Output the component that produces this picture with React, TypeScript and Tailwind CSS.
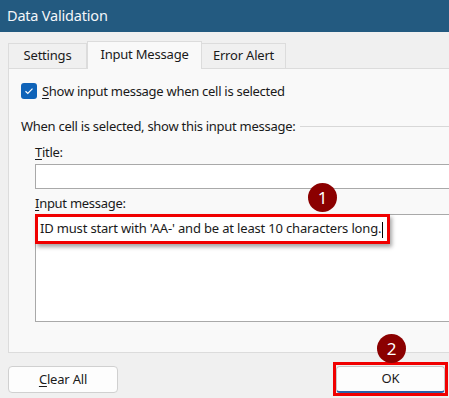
import React from "react";

const font = { fontFamily: '"Noto Sans", "Open Sans", sans-serif' };

function Badge({ n, className }: { n: string; className: string }) {
  return (
    <div
      className={`absolute w-[29px] h-[29px] rounded-full bg-[#8b0000] text-white text-[17px] flex items-center justify-center leading-none ${className}`}
    >
      {n}
    </div>
  );
}

export default function App() {
  return (
    <div
      className="relative w-[449px] h-[398px] overflow-hidden bg-[#f0f0f0] text-[#1a1a1a]"
      style={font}
    >
      {/* Title bar */}
      <div className="h-[32px] bg-[#235a80] flex items-center pl-[7px] text-[14.5px] text-[#f3f6f9] tracking-[-0.2px]">
        Data Validation
      </div>

      {/* Tabs */}
      <div className="flex items-end h-[36px] pl-[8px] text-[13px] tracking-[-0.2px]">
        <div className="w-[79px] h-[25px] border border-b-0 border-[#dcdcdc] bg-[#f0f0f0] flex items-center justify-center">
          Settings
        </div>
        <div className="w-[115px] h-[28px] border border-b-0 border-[#dcdcdc] bg-[#f9f9f9] flex items-center justify-center pb-[2px] relative z-10 -mb-px">
          Input Message
        </div>
        <div className="w-[84px] h-[25px] border border-b-0 border-l-0 border-[#dcdcdc] bg-[#f0f0f0] flex items-center justify-center">
          Error Alert
        </div>
      </div>

      {/* Panel */}
      <div className="ml-[8px] w-[460px] h-[285px] border border-[#dcdcdc] bg-[#f9f9f9] pl-[12px] pt-[14px] text-[13px] tracking-[-0.28px]">
        <div className="flex items-center h-[16px]">
          <div className="w-[16px] h-[16px] rounded-[3px] bg-[#0f63b8] flex items-center justify-center">
            <svg width="10" height="8" viewBox="0 0 10 8">
              <path d="M1.5 4.2 L3.8 6.4 L8.5 1.6" fill="none" stroke="white" strokeWidth="1.2" />
            </svg>
          </div>
          <span className="ml-[5px] leading-[18px]">
            <span className="underline underline-offset-2">S</span>how input message when cell is selected
          </span>
        </div>

        <div className="mt-[18px] flex items-center h-[18px]">
          <span className="leading-[18px] whitespace-nowrap">When cell is selected, show this input message:</span>
          <div className="ml-[5px] flex-1 h-px bg-[#d8d8d8]" />
        </div>

        <div className="ml-[14px]">
          <div className="mt-[8px] leading-[18px]">
            <span className="underline underline-offset-2">T</span>itle:
          </div>
          <div className="mt-[3px] h-[25px] border border-[#a9a9a9] bg-white" />
          <div className="mt-[5px] leading-[18px]">
            <span className="underline underline-offset-2">I</span>nput message:
          </div>
          <div className="mt-[2px] h-[108px] border border-[#a9a9a9] bg-white pl-[4px] pt-[4px] leading-[18px] whitespace-nowrap tracking-[-0.17px]">
            ID must start with 'AA-' and be at least 10 characters long.
            <span className="inline-block w-px h-[16px] bg-black align-middle ml-px" />
          </div>
        </div>
      </div>

      {/* Buttons */}
      <div className="flex mt-[13px] pl-[8px] text-[13px] tracking-[-0.2px]">
        <div className="w-[110px] h-[27px] rounded-[4px] border border-[#d0d0d0] bg-[#fdfdfd] flex items-center justify-center">
          <span className="underline underline-offset-2">C</span>lear All
        </div>
        <div className="ml-[218px] w-[109px] h-[27px] rounded-[4px] border border-[#c8c8c8] border-b-2 border-b-[#2a62a8] bg-[#fdfdfd] flex items-center justify-center">
          OK
        </div>
      </div>

      {/* Overlays */}
      <div className="absolute left-[35px] top-[214px] w-[355px] h-[30px] border-[3px] border-[#f00000] shadow-[2px_3px_4px_rgba(0,0,0,0.35)]" />
      <div className="absolute left-[333px] top-[362px] w-[115px] h-[34px] border-[3px] border-[#f00000]" />
      <Badge n="1" className="left-[308px] top-[183px]" />
      <Badge n="2" className="left-[377px] top-[334px]" />
    </div>
  );
}
